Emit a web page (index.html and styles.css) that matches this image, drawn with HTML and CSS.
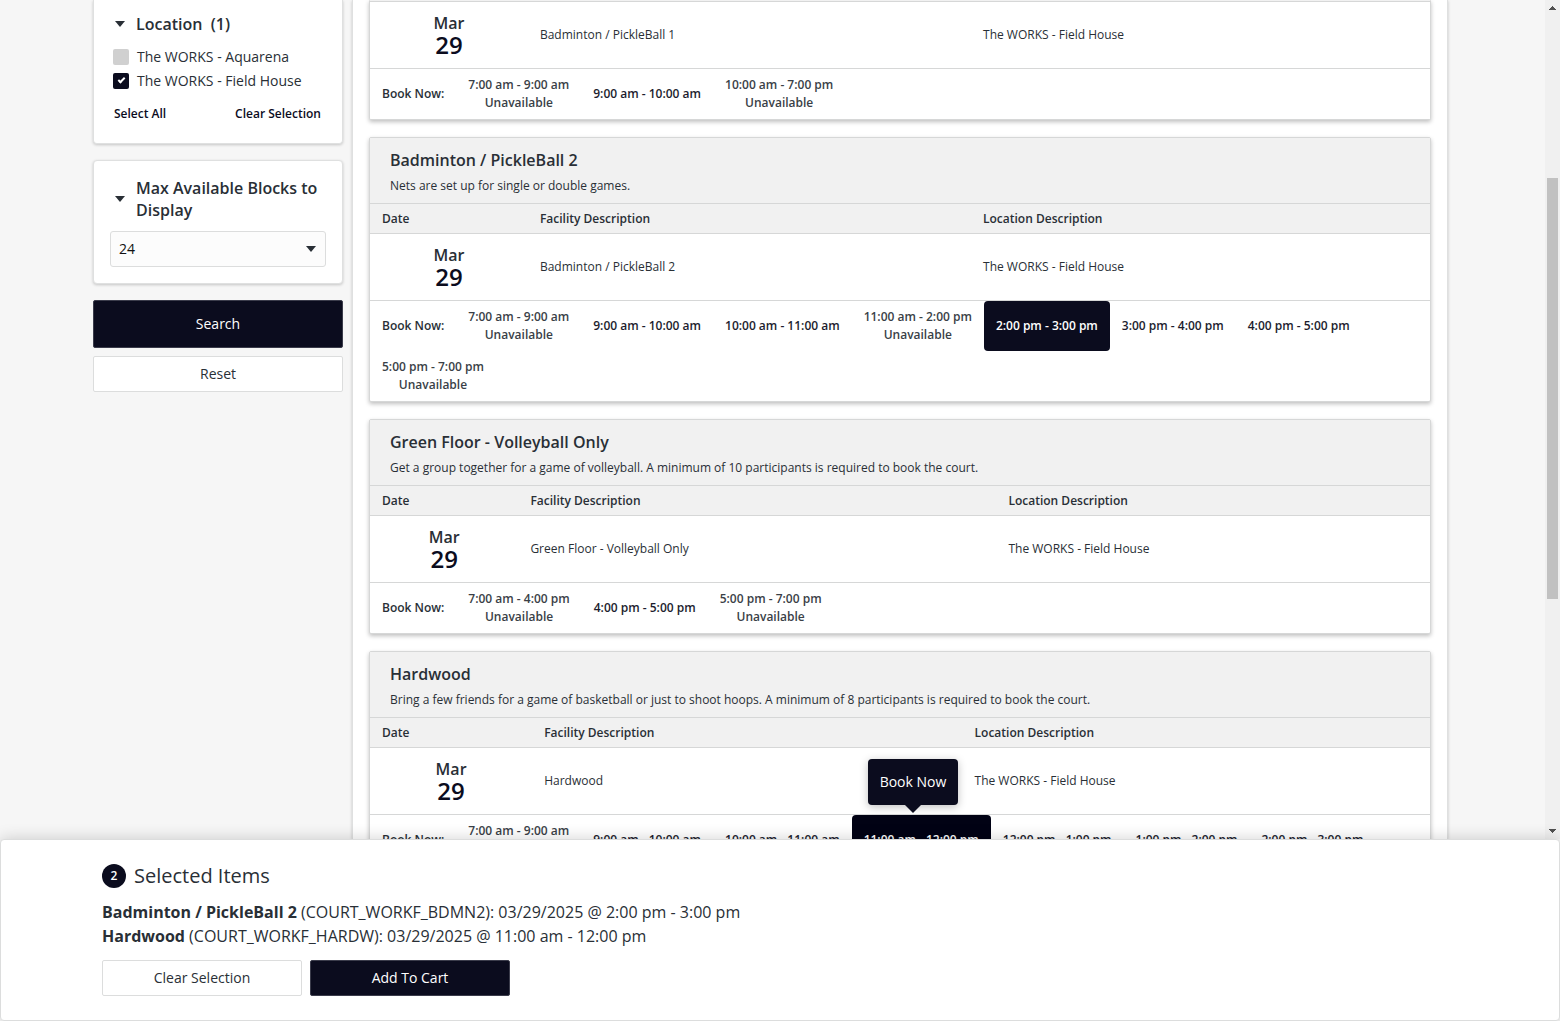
FILE: index.html
```html
<!DOCTYPE html>
<html lang="en">
<head>
<meta charset="utf-8">
<title>Court bookings</title>
<link rel="stylesheet" href="styles.css">
</head>
<body>
<div class="viewport">
  <div class="content">
    <form class="filters">
      <section class="panel panel-location">
        <h2 class="panel-title"><span class="caret"></span>Location&nbsp; (1)</h2>
        <div class="checks">
          <label class="check"><input type="checkbox"><span>The WORKS - Aquarena</span></label>
          <label class="check"><input type="checkbox" checked><span>The WORKS - Field House</span></label>
        </div>
        <div class="panel-links">
          <button type="button" class="link-button">Select All</button>
          <button type="button" class="link-button">Clear Selection</button>
        </div>
      </section>
      <section class="panel panel-blocks">
        <h2 class="panel-title"><span class="caret"></span><label for="blocks">Max Available Blocks to Display</label></h2>
        <div class="select-wrap">
          <select id="blocks"><option>24</option></select>
          <span class="caret select-caret"></span>
        </div>
      </section>
      <div class="filter-actions">
        <button type="button" class="button button-primary button-tall">Search</button>
        <button type="button" class="button">Reset</button>
      </div>
    </form>

    <main class="results">
      <section class="card card-first">
        <table class="facility cols-badminton">
          <colgroup><col class="col-date"><col class="col-facility"><col></colgroup>
          <tbody><tr>
            <td class="date"><span class="month">Mar</span><span class="day">29</span></td>
            <td>Badminton / PickleBall 1</td>
            <td>The WORKS - Field House</td>
          </tr></tbody>
        </table>
        <div class="slots">
          <span class="slots-label">Book Now:</span>
          <button class="slot" disabled>7:00 am - 9:00 am<br>Unavailable</button>
          <button class="slot">9:00 am - 10:00 am</button>
          <button class="slot" disabled>10:00 am - 7:00 pm<br>Unavailable</button>
        </div>
      </section>

      <section class="card">
        <header class="card-head">
          <h2>Badminton / PickleBall 2</h2>
          <p>Nets are set up for single or double games.</p>
        </header>
        <table class="facility cols-badminton">
          <colgroup><col class="col-date"><col class="col-facility"><col></colgroup>
          <thead><tr><th>Date</th><th>Facility Description</th><th>Location Description</th></tr></thead>
          <tbody><tr>
            <td class="date"><span class="month">Mar</span><span class="day">29</span></td>
            <td>Badminton / PickleBall 2</td>
            <td>The WORKS - Field House</td>
          </tr></tbody>
        </table>
        <div class="slots">
          <span class="slots-label">Book Now:</span>
          <button class="slot" disabled>7:00 am - 9:00 am<br>Unavailable</button>
          <button class="slot">9:00 am - 10:00 am</button>
          <button class="slot">10:00 am - 11:00 am</button>
          <button class="slot" disabled>11:00 am - 2:00 pm<br>Unavailable</button>
          <button class="slot slot-selected">2:00 pm - 3:00 pm</button>
          <button class="slot">3:00 pm - 4:00 pm</button>
          <button class="slot">4:00 pm - 5:00 pm</button>
          <button class="slot" disabled>5:00 pm - 7:00 pm<br>Unavailable</button>
        </div>
      </section>

      <section class="card">
        <header class="card-head">
          <h2>Green Floor - Volleyball Only</h2>
          <p>Get a group together for a game of volleyball. A minimum of 10 participants is required to book the court.</p>
        </header>
        <table class="facility cols-green">
          <colgroup><col class="col-date"><col class="col-facility"><col></colgroup>
          <thead><tr><th>Date</th><th>Facility Description</th><th>Location Description</th></tr></thead>
          <tbody><tr>
            <td class="date"><span class="month">Mar</span><span class="day">29</span></td>
            <td>Green Floor - Volleyball Only</td>
            <td>The WORKS - Field House</td>
          </tr></tbody>
        </table>
        <div class="slots">
          <span class="slots-label">Book Now:</span>
          <button class="slot" disabled>7:00 am - 4:00 pm<br>Unavailable</button>
          <button class="slot">4:00 pm - 5:00 pm</button>
          <button class="slot" disabled>5:00 pm - 7:00 pm<br>Unavailable</button>
        </div>
      </section>

      <section class="card">
        <header class="card-head">
          <h2>Hardwood</h2>
          <p>Bring a few friends for a game of basketball or just to shoot hoops. A minimum of 8 participants is required to book the court.</p>
        </header>
        <table class="facility cols-hardwood">
          <colgroup><col class="col-date"><col class="col-facility"><col></colgroup>
          <thead><tr><th>Date</th><th>Facility Description</th><th>Location Description</th></tr></thead>
          <tbody><tr>
            <td class="date"><span class="month">Mar</span><span class="day">29</span></td>
            <td>Hardwood</td>
            <td>The WORKS - Field House</td>
          </tr></tbody>
        </table>
        <div class="slots">
          <span class="slots-label">Book Now:</span>
          <button class="slot" disabled>7:00 am - 9:00 am<br>Unavailable</button>
          <button class="slot">9:00 am - 10:00 am</button>
          <button class="slot">10:00 am - 11:00 am</button>
          <div class="slot-anchor">
            <button class="slot slot-selected slot-hover" aria-describedby="tip">11:00 am - 12:00 pm</button>
            <div class="tooltip" id="tip" role="tooltip">Book Now</div>
          </div>
          <button class="slot">12:00 pm - 1:00 pm</button>
          <button class="slot">1:00 pm - 2:00 pm</button>
          <button class="slot">2:00 pm - 3:00 pm</button>
        </div>
      </section>
    </main>
  </div>

  <div class="scrollbar" aria-hidden="true">
    <svg class="scroll-arrow" viewBox="0 0 7 4"><path d="M3 0h1v1h1v1h1v1h1v1H0V3h1V2h1V1h1z"/></svg>
    <div class="scroll-track"><div class="scroll-thumb"></div></div>
    <svg class="scroll-arrow" viewBox="0 0 7 4"><path d="M0 0h7v1H6v1H5v1H4v1H3V3H2V2H1V1H0z"/></svg>
  </div>
</div>

<footer class="cart">
  <h2 class="cart-title"><span class="count">2</span>Selected Items</h2>
  <ul class="cart-items">
    <li><strong>Badminton / PickleBall 2</strong> (COURT_WORKF_BDMN2): 03/29/2025 @ 2:00 pm - 3:00 pm</li>
    <li><strong>Hardwood</strong> (COURT_WORKF_HARDW): 03/29/2025 @ 11:00 am - 12:00 pm</li>
  </ul>
  <div class="cart-actions">
    <button type="button" class="button">Clear Selection</button>
    <button type="button" class="button button-primary">Add To Cart</button>
  </div>
</footer>
</body>
</html>
```
FILE: styles.css
```css
:root {
  --ink: #292f36;
  --navy: #0b0c1e;
  --line: #d6d7d7;
}

* { box-sizing: border-box; }

body {
  margin: 0;
  height: 100vh;
  display: flex;
  flex-direction: column;
  overflow: hidden;
  background: #f6f6f6;
  color: var(--ink);
  font: 14px/20px "Open Sans", "Noto Sans", sans-serif;
}

h2, p, ul { margin: 0; padding: 0; }
button, select { font: inherit; color: inherit; }

.viewport {
  flex: 1;
  min-height: 0;
  display: flex;
  overflow: hidden;
}

.content {
  flex: 1;
  display: flex;
  gap: 9px;
  padding: 0 97px 0 93px;
}

/* Filters */
.filters {
  flex: none;
  width: 250px;
  display: flex;
  flex-direction: column;
  gap: 16px;
}

.panel {
  background: #fff;
  border: 1px solid #dfe0e0;
  border-radius: 4px;
  box-shadow: 0 1px 3px rgba(0, 0, 0, .2);
  padding: 16px;
}

.panel-location {
  border-top: 0;
  border-radius: 0 0 4px 4px;
  padding: 13px 16px 19px;
}

.panel-title {
  display: flex;
  align-items: center;
  gap: 11px;
  padding-left: 5px;
  font-size: 16px;
  line-height: 22px;
  font-weight: 600;
}

.caret {
  flex: none;
  border: 5px solid transparent;
  border-top: 6px solid var(--ink);
  border-bottom: 0;
}

.checks { padding: 10px 3px 0; }

.check {
  display: flex;
  align-items: center;
  gap: 8px;
  height: 24px;
}

.check input {
  appearance: none;
  width: 16px;
  height: 16px;
  margin: 0;
  border-radius: 2px;
  background: #d0d0d0;
  display: grid;
  place-items: center;
}

.check input:checked { background: var(--navy); }

.check input:checked::before {
  content: "";
  width: 5px;
  height: 2px;
  border: solid #fff;
  border-width: 0 0 2px 2px;
  transform: rotate(-45deg) translate(1px, -1px);
}

.panel-links {
  display: flex;
  justify-content: space-between;
  padding: 11px 5px 0 4px;
}

.link-button {
  border: 0;
  padding: 0;
  background: none;
  color: var(--navy);
  font-size: 12px;
  font-weight: 600;
}

.select-wrap {
  position: relative;
  margin-top: 10px;
}

.select-wrap select {
  appearance: none;
  display: block;
  width: 100%;
  height: 36px;
  padding: 0 8px;
  border: 1px solid #dcdddd;
  border-radius: 3px;
  background: #fcfcfc;
  color: #111;
}

.select-caret {
  position: absolute;
  right: 10px;
  top: 15px;
}

.button {
  flex: none;
  height: 36px;
  padding: 0 16px;
  border: 1px solid #dcdddd;
  border-radius: 2px;
  background: #fff;
}

.button-primary {
  background: var(--navy);
  border-color: #3b3c4b;
  color: #fff;
}

.button-tall { height: 48px; }

.filter-actions {
  display: flex;
  flex-direction: column;
  gap: 8px;
}

/* Results */
.results {
  flex: 1;
  display: flex;
  flex-direction: column;
  gap: 17px;
  padding: 0 16px;
  background: #fff;
  border: solid #dfe0e0;
  border-width: 0 1px;
  box-shadow: 0 1px 3px rgba(0, 0, 0, .2);
}

.card {
  flex: none;
  background: #fff;
  border: 1px solid var(--line);
  border-radius: 2px;
  box-shadow: 0 2px 4px rgba(0, 0, 0, .25);
  font-size: 12px;
}

.card-first {
  border-top-color: #f1f1f1;
  border-radius: 0 0 2px 2px;
}

.card-head {
  padding: 10px 20px 7px;
  background: #f1f1f1;
}

.card-head h2 {
  font-size: 16px;
  line-height: 24px;
  font-weight: 600;
}

.card-head p {
  padding: 4px 0 0;
  line-height: 20px;
}

.facility {
  width: 100%;
  table-layout: fixed;
  border-spacing: 0;
}

.cols-badminton .col-date { width: 14.9%; }
.cols-badminton .col-facility { width: 41.8%; }
.cols-green .col-date { width: 14%; }
.cols-green .col-facility { width: 45.1%; }
.cols-hardwood .col-date { width: 15.3%; }
.cols-hardwood .col-facility { width: 40.6%; }

.facility th {
  height: 30px;
  padding: 0 12px;
  border-top: 1px solid var(--line);
  background: #f1f1f1;
  font-weight: 600;
  text-align: left;
}

.facility td {
  height: 67px;
  padding: 0 12px;
  border-top: 1px solid var(--line);
}

.facility .date { text-align: center; font-weight: 600; }

.month {
  display: block;
  font-size: 16px;
  line-height: 20px;
}

.day {
  display: block;
  color: var(--navy);
  font-size: 24px;
  line-height: 24px;
}

.slots {
  display: flex;
  flex-wrap: wrap;
  border-top: 1px solid var(--line);
  font-weight: 600;
}

.slots-label, .slot {
  height: 50px;
  padding: 0 12px;
}

.slots-label { line-height: 50px; }

.slot {
  border: 0;
  border-radius: 4px;
  background: none;
  color: #1c1d2e;
  line-height: 18px;
}

.slot:disabled { color: #3a3f47; }

.slot-selected {
  background: var(--navy);
  color: #fff;
}

.slot-hover { background: #010214; }

.slot-anchor { position: relative; }

.tooltip {
  position: absolute;
  left: 16px;
  bottom: 60px;
  padding: 13px 12px;
  border-radius: 4px;
  background: var(--navy);
  color: #fff;
  font-size: 14px;
  font-weight: 400;
  white-space: nowrap;
  box-shadow: 0 2px 8px rgba(0, 0, 0, .25);
}

.tooltip::after {
  content: "";
  position: absolute;
  left: 50%;
  top: 100%;
  margin-left: -8px;
  border: 8px solid transparent;
  border-top-color: var(--navy);
  border-bottom: 0;
}

/* Scrollbar */
.scrollbar {
  flex: none;
  width: 15px;
  display: flex;
  flex-direction: column;
  align-items: center;
  padding: 6px 0;
  background: #f0f0f0;
}

.scroll-arrow {
  width: 7px;
  height: 4px;
  fill: #505050;
}

.scroll-track {
  flex: 1;
  width: 11px;
  padding: 168px 0 230px;
  display: flex;
}

.scroll-thumb {
  flex: 1;
  background: #c1c1c1;
}

/* Selected items */
.cart {
  position: relative;
  flex: none;
  padding: 24px 101px;
  border: 1px solid #dcdddd;
  border-radius: 4px;
  background: #fff;
  box-shadow: 0 0 16px rgba(0, 0, 0, .18);
}

.cart-title {
  display: flex;
  align-items: center;
  gap: 8px;
  font-size: 20px;
  line-height: 24px;
  font-weight: 400;
}

.count {
  width: 24px;
  border-radius: 50%;
  background: var(--navy);
  color: #fff;
  font-size: 12px;
  font-weight: 600;
  text-align: center;
}

.cart-items {
  list-style: none;
  padding: 12px 0;
  font-size: 16px;
  line-height: 24px;
}

.cart-actions {
  display: flex;
  gap: 8px;
}

.cart-actions .button { width: 200px; }
```
